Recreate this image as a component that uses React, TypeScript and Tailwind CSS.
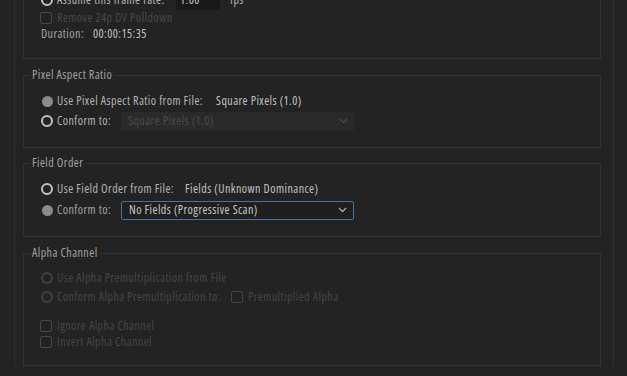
import React from 'react';

type RadioKind = 'on' | 'off' | 'disabled';

const Radio = ({ kind }: { kind: RadioKind }) => {
  if (kind === 'on') {
    return <span className="w-[11px] h-[11px] rounded-full bg-[#8a8a8a] shrink-0 ml-[1px] mr-[4px]" />;
  }
  return (
    <span
      className={`w-[12px] h-[12px] rounded-full border-2 shrink-0 mr-[4px] ${
        kind === 'off' ? 'border-[#c2c2c2]' : 'border-[#424242]'
      }`}
    />
  );
};

const Checkbox = () => (
  <span className="w-[12px] h-[12px] rounded-[2px] border border-[#454545] shrink-0 mr-[5px]" />
);

const Chevron = ({ color }: { color: string }) => (
  <svg width="9" height="6" viewBox="0 0 9 6" fill="none">
    <polyline points="1,1 4.5,4.5 8,1" stroke={color} strokeWidth="1.3" />
  </svg>
);

const Dropdown = ({ value, active }: { value: string; active?: boolean }) => (
  <div
    className={`w-[233px] h-[19px] flex items-center justify-between pl-[7px] pr-[6px] rounded-[2px] ${
      active ? 'border border-[#46739f] bg-[#1f1f1f] text-[#c8c8c8]' : 'bg-[#2a2a2a] text-[#4b4b4b]'
    }`}
  >
    <span>{value}</span>
    <Chevron color={active ? '#a9a9a9' : '#4a4a4a'} />
  </div>
);

const Group = ({ title, className, children }: { title: string; className: string; children: React.ReactNode }) => (
  <fieldset className={`border border-[#323232] ${className}`}>
    <legend className="ml-[6px] px-[2px] leading-[14px] text-[#a2a2a2]">{title}</legend>
    <div className="pl-[16px]">{children}</div>
  </fieldset>
);

export default function App() {
  return (
    <div
      className="w-[627px] h-[376px] bg-[#232323] overflow-hidden text-[12px] font-stretch-condensed tracking-[0.45px] text-[#b4b4b4]"
      style={{ fontFamily: '"Open Sans", sans-serif' }}
    >
      <div className="ml-[14px] w-[600px] h-full border-x border-[#2e2e2e] pl-[8px] pr-[12px]">
        {/* Frame rate group (top cut off) */}
        <div className="-mt-[10px] h-[69px] border-x border-b border-[#323232] pl-[16px] flex flex-col">
          <div className="h-[20px] flex items-center pl-[1px]">
            <Radio kind="off" />
            <span className="w-[119px]">Assume this frame rate:</span>
            <div className="w-[44px] h-[19px] bg-[#191919] pl-[4px] flex items-center text-[#c8c8c8]">1.00</div>
            <span className="ml-[10px]">fps</span>
          </div>
          <div className="h-[16px] flex items-center text-[#484848]">
            <Checkbox />
            <span>Remove 24p DV Pulldown</span>
          </div>
          <div className="h-[16px] flex items-center pl-[1px]">
            <span className="w-[52px] text-[#a4a4a4]">Duration:</span>
            <span className="text-[#c2c2c2]">00:00:15:35</span>
          </div>
        </div>

        <Group title="Pixel Aspect Ratio" className="mt-[9px] pt-[9px] pb-[16px]">
          <div className="h-[20px] flex items-center pl-[1px]">
            <Radio kind="on" />
            <span className="w-[159px]">Use Pixel Aspect Ratio from File:</span>
            <span className="text-[#c2c2c2]">Square Pixels (1.0)</span>
          </div>
          <div className="h-[20px] flex items-center pl-[1px]">
            <Radio kind="off" />
            <span className="w-[64px]">Conform to:</span>
            <Dropdown value="Square Pixels (1.0)" />
          </div>
        </Group>

        <Group title="Field Order" className="mt-[8px] pt-[9px] pb-[16px]">
          <div className="h-[20px] flex items-center pl-[1px]">
            <Radio kind="off" />
            <span className="w-[128px]">Use Field Order from File:</span>
            <span className="text-[#c2c2c2]">Fields (Unknown Dominance)</span>
          </div>
          <div className="h-[20px] mt-[1px] flex items-center pl-[1px]">
            <Radio kind="on" />
            <span className="w-[64px] text-[#a2a2a2]">Conform to:</span>
            <Dropdown value="No Fields (Progressive Scan)" active />
          </div>
        </Group>

        <Group title="Alpha Channel" className="mt-[9px] pt-[8px] pb-[15px] text-[#464646]">
          <div className="h-[19px] flex items-center pl-[1px]">
            <Radio kind="disabled" />
            <span>Use Alpha Premultiplication from File</span>
          </div>
          <div className="h-[19px] flex items-center pl-[1px]">
            <Radio kind="disabled" />
            <span className="w-[174px]">Conform Alpha Premultiplication to:</span>
            <Checkbox />
            <span>Premultiplied Alpha</span>
          </div>
          <div className="h-[16px] mt-[12px] flex items-center">
            <Checkbox />
            <span>Ignore Alpha Channel</span>
          </div>
          <div className="h-[16px] flex items-center">
            <Checkbox />
            <span>Invert Alpha Channel</span>
          </div>
        </Group>
      </div>
    </div>
  );
}
